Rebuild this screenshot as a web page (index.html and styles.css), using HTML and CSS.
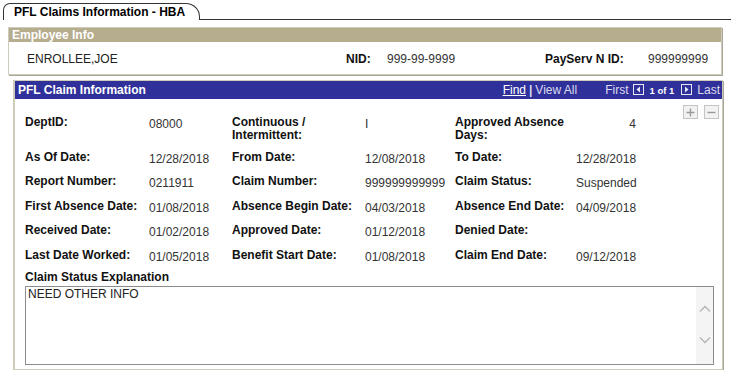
FILE: index.html
```html
<!DOCTYPE html>
<html lang="en">
<head>
  <meta charset="UTF-8">
  <title>PFL Claims Information - HBA</title>
  <link rel="stylesheet" href="styles.css">
</head>
<body>
  <div class="tabs">
    <div class="tab">PFL Claims Information - HBA</div>
    <div class="tab-rest"></div>
  </div>

  <div class="group emp">
    <div class="group-title">Employee Info</div>
    <div class="emp-row">
      <span class="emp-name">ENROLLEE,JOE</span>
      <span class="lbl nid-lbl">NID:</span>
      <span class="val nid-val">999-99-9999</span>
      <span class="lbl pay-lbl">PayServ N ID:</span>
      <span class="val">999999999</span>
    </div>
  </div>

  <div class="group claim">
    <div class="claim-head">
      <span class="claim-title">PFL Claim Information</span>
      <span class="nav">
        <a class="find">Find</a><span class="sep">|</span><span class="dim">View All</span>
        <span class="first">First</span>
        <span class="arrow"><svg width="11" height="11" viewBox="0 0 11 11"><rect x="0.5" y="0.5" width="10" height="10" fill="none" stroke="#e6e6f5"/><path d="M7 2.5 L3.5 5.5 L7 8.5 Z" fill="#e6e6f5"/></svg></span>
        <b class="count">1 of 1</b>
        <span class="arrow"><svg width="11" height="11" viewBox="0 0 11 11"><rect x="0.5" y="0.5" width="10" height="10" fill="none" stroke="#e6e6f5"/><path d="M4 2.5 L7.5 5.5 L4 8.5 Z" fill="#e6e6f5"/></svg></span>
        <span class="last">Last</span>
      </span>
    </div>

    <div class="row-tools">
      <span class="tool"><svg width="9" height="9" viewBox="0 0 9 9"><path d="M4.5 0.5 V8.5 M0.5 4.5 H8.5" stroke="#9a9a9a" stroke-width="1.4"/></svg></span>
      <span class="tool"><svg width="9" height="9" viewBox="0 0 9 9"><path d="M0.5 4.5 H8.5" stroke="#9a9a9a" stroke-width="1.4"/></svg></span>
    </div>

    <div class="fields">
      <div class="lbl">DeptID:</div><div class="val">08000</div>
      <div class="lbl">Continuous /<br>Intermittent:</div><div class="val">I</div>
      <div class="lbl">Approved Absence<br>Days:</div><div class="val num">4</div>

      <div class="lbl">As Of Date:</div><div class="val">12/28/2018</div>
      <div class="lbl">From Date:</div><div class="val">12/08/2018</div>
      <div class="lbl">To Date:</div><div class="val">12/28/2018</div>

      <div class="lbl">Report Number:</div><div class="val">0211911</div>
      <div class="lbl">Claim Number:</div><div class="val">999999999999</div>
      <div class="lbl">Claim Status:</div><div class="val">Suspended</div>

      <div class="lbl">First Absence Date:</div><div class="val">01/08/2018</div>
      <div class="lbl">Absence Begin Date:</div><div class="val">04/03/2018</div>
      <div class="lbl">Absence End Date:</div><div class="val">04/09/2018</div>

      <div class="lbl">Received Date:</div><div class="val">01/02/2018</div>
      <div class="lbl">Approved Date:</div><div class="val">01/12/2018</div>
      <div class="lbl">Denied Date:</div><div class="val"></div>

      <div class="lbl">Last Date Worked:</div><div class="val">01/05/2018</div>
      <div class="lbl">Benefit Start Date:</div><div class="val">01/08/2018</div>
      <div class="lbl">Claim End Date:</div><div class="val">09/12/2018</div>
    </div>

    <div class="lbl expl-lbl">Claim Status Explanation</div>
    <div class="expl">
      <div class="expl-text">NEED OTHER INFO</div>
      <div class="scroll">
        <svg width="12" height="8" viewBox="0 0 12 8"><path d="M1 6.5 L6 1.5 L11 6.5" fill="none" stroke="#b4b4b4" stroke-width="1.3"/></svg>
        <svg width="12" height="8" viewBox="0 0 12 8"><path d="M1 1.5 L6 6.5 L11 1.5" fill="none" stroke="#b4b4b4" stroke-width="1.3"/></svg>
      </div>
    </div>
  </div>
</body>
</html>
```

FILE: styles.css
```css
body {
  margin: 0;
  background: #fff;
  font-family: "Liberation Sans", Arial, sans-serif;
  font-size: 12px;
  color: #000;
  width: 731px;
}
.tabs {
  display: flex;
  align-items: flex-end;
  padding: 3px 0 0 3px;
  height: 17px;
}
.tab {
  font-weight: bold;
  font-size: 12px;
  padding: 1px 14px 0 10px;
  height: 15px;
  border: 1px solid #333;
  border-bottom: none;
  border-radius: 7px 14px 0 0;
}
.tab-rest {
  flex: 1;
  border-bottom: 1px solid #333;
}
.group {
  border: 1px solid #cfcbbb;
  box-shadow: 1px 1px 0 #a9a699;
}
.emp {
  margin: 7px 9px 0 8px;
  height: 46px;
}
.group-title {
  background: #b6ad8f;
  color: #fff;
  font-weight: bold;
  height: 14px;
  line-height: 14px;
  padding-left: 3px;
}
.emp-row {
  display: flex;
  align-items: center;
  padding: 10px 0 0 18px;
  color: #222;
}
.emp-name {
  width: 319px;
}
.lbl {
  font-weight: bold;
  color: #111;
}
.val {
  color: #333;
}
.nid-lbl {
  width: 41px;
}
.nid-val {
  width: 158px;
}
.pay-lbl {
  width: 103px;
}
.claim {
  margin: 5px 8px 0 13px;
  border-width: 1px 1px 1px 2px;
  padding-bottom: 4px;
}
.claim-head {
  background: #30309a;
  color: #fff;
  height: 18px;
  display: flex;
  align-items: center;
  justify-content: space-between;
  padding: 0 2px 0 3px;
}
.claim-title {
  font-weight: bold;
}
.nav {
  display: flex;
  align-items: center;
  color: #dcdcf0;
}
.find {
  color: #fff;
  text-decoration: underline;
}
.sep {
  margin: 0 3px;
  font-weight: bold;
  color: #dcdcf0;
}
.first {
  margin-left: 28px;
}
.arrow {
  display: flex;
  margin: 0 3px 2px 4px;
}
.count {
  font-size: 9.5px;
  color: #fff;
  margin: 0 3px;
}
.last {
  margin-left: 2px;
}
.row-tools {
  display: flex;
  justify-content: flex-end;
  gap: 6px;
  padding: 6px 3px 0 0;
  height: 14px;
}
.tool {
  width: 13px;
  height: 12px;
  border: 1px solid #c4c4c4;
  background: #f2f2f2;
  display: flex;
  align-items: center;
  justify-content: center;
}
.fields {
  display: grid;
  grid-template-columns: 124px 83px 133px 90px 121px 60px;
  grid-template-rows: 35px repeat(5, 24.4px);
  line-height: 13px;
  padding-left: 10px;
  margin-top: -3px;
}
.fields .val {
  padding-top: 2px;
}
.fields .num {
  text-align: right;
}
.expl-lbl {
  padding: 0 0 2px 10px;
  margin-top: -3px;
}
.expl {
  margin: 0 8px 0 10px;
  height: 77px;
  border: 1px solid #8c8c8c;
  display: flex;
}
.expl-text {
  flex: 1;
  padding: 0 2px;
  color: #222;
}
.scroll {
  width: 17px;
  background: #f4f4f4;
  display: flex;
  flex-direction: column;
  align-items: center;
  justify-content: space-around;
  padding: 7px 0 9px;
}
```
